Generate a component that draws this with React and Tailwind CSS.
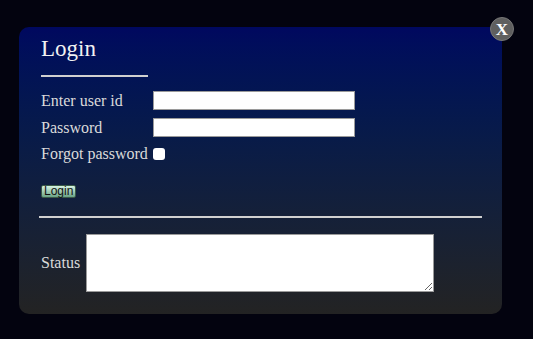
import React from 'react';

const serif = { fontFamily: '"Liberation Serif", "Times New Roman", serif' };

const App = () => {
    return (
        <div className="w-[533px] h-[339px] bg-[#03030f] pt-[27px] pl-[19px]" style={serif}>
            <div className="relative w-[483px] h-[287px] rounded-[10px] bg-gradient-to-b from-[#00085f] to-[#232323] pl-[22px] pt-[9px]">
                {/* close button */}
                <button className="absolute -top-[10px] -right-[12px] w-[24px] h-[24px] rounded-full bg-[#5f5f5f] border border-[#777] text-white font-bold text-[17px] leading-none flex items-center justify-center">
                    X
                </button>

                <h1 className="text-[23px] leading-[26px] text-[#f2f2f2]">Login</h1>
                <div className="w-[107px] h-[2px] bg-[#d0d0d0] mt-[13px]"></div>

                <div className="mt-[14px] flex items-center h-[19px]">
                    <span className="w-[112px] text-[16px] text-[#dadada]">Enter user id</span>
                    <input className="w-[202px] h-[19px] bg-white border border-[#9a9a9a]" />
                </div>
                <div className="mt-[8px] flex items-center h-[19px]">
                    <span className="w-[112px] text-[16px] text-[#dadada]">Password</span>
                    <input type="password" className="w-[202px] h-[19px] bg-white border border-[#9a9a9a]" />
                </div>
                <div className="mt-[9px] flex items-center h-[16px]">
                    <span className="text-[16px] text-[#dadada]">Forgot password</span>
                    <input type="checkbox" className="ml-[5px] w-[12px] h-[12px] appearance-none bg-white rounded-[3px]" />
                </div>

                <button
                    className="mt-[23px] block h-[13px] px-[2px] rounded-[2px] border border-[#3a5a48] bg-gradient-to-b from-[#d6f2e2] to-[#6aa487] text-[12px] leading-[11px] text-[#111]"
                    style={{ fontFamily: '"Liberation Sans", Arial, sans-serif' }}
                >
                    Login
                </button>

                <div className="mt-[18px] -ml-[2px] w-[443px] h-[2px] bg-[#d0d0d0]"></div>

                <div className="mt-[16px] flex items-center">
                    <span className="w-[45px] text-[16px] text-[#dadada]">Status</span>
                    <textarea className="w-[348px] h-[58px] bg-white border border-[#9a9a9a] resize"></textarea>
                </div>
            </div>
        </div>
    );
};

export default App;
